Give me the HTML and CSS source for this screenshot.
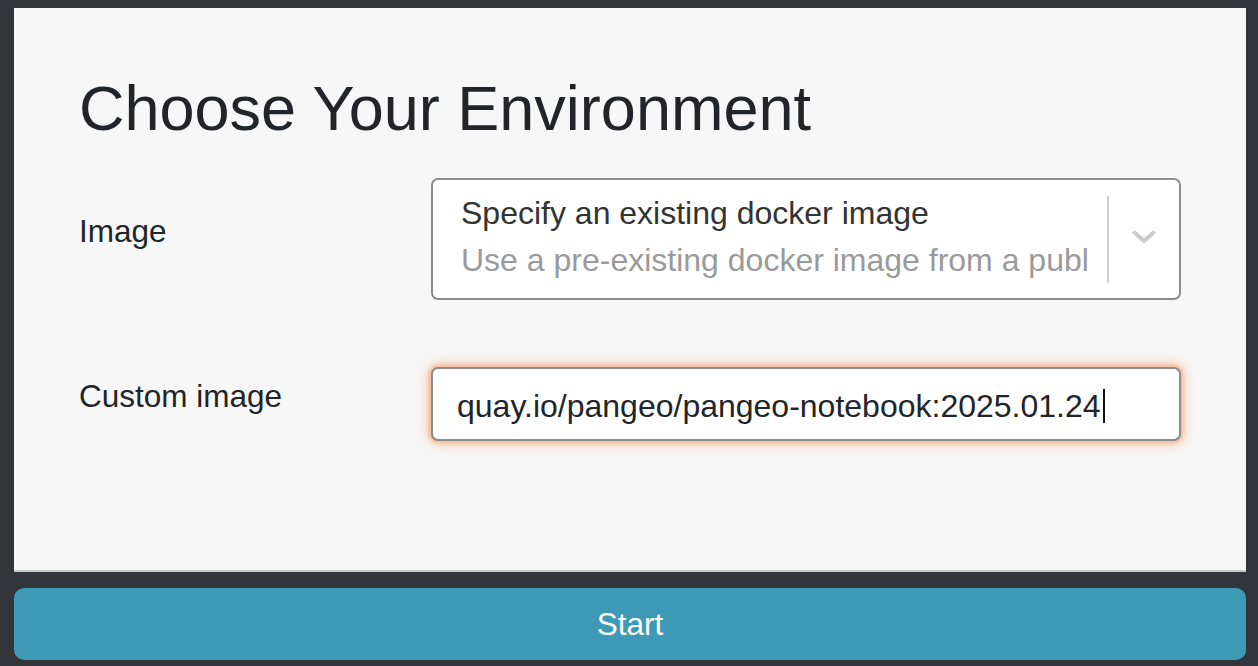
FILE: index.html
```html
<!DOCTYPE html>
<html lang="en">
<head>
<meta charset="utf-8">
<title>Choose Your Environment</title>
<link rel="stylesheet" href="styles.css">
</head>
<body>
  <main class="panel">
    <h1 class="title">Choose Your Environment</h1>
    <div class="row row-image">
      <label class="label">Image</label>
      <div class="select">
        <div class="select-text">
          <div class="select-main">Specify an existing docker image</div>
          <div class="select-sub">Use a pre-existing docker image from a public repository</div>
        </div>
        <div class="select-sep"></div>
        <div class="select-arrow">
          <svg width="24" height="14" viewBox="0 0 24 14"><polyline points="2.5,2.5 12,11 21.5,2.5" fill="none" stroke="#cccccc" stroke-width="4" stroke-linecap="round" stroke-linejoin="round"/></svg>
        </div>
      </div>
    </div>
    <div class="row row-custom">
      <label class="label">Custom image</label>
      <div class="input focused"><span class="input-value">quay.io/pangeo/pangeo-notebook:2025.01.24</span><span class="caret"></span></div>
    </div>
  </main>
  <button class="start">Start</button>
</body>
</html>
```
FILE: styles.css
```css
html, body {
  margin: 0;
  height: 100%;
}
body {
  background: #323539;
  padding: 8px 12px 0 14px;
  box-sizing: border-box;
  font-family: "Liberation Sans", Arial, Helvetica, sans-serif;
  color: #212529;
}
.panel {
  background: #f7f7f7;
  border-bottom: 2px solid #c8c8c8;
  padding: 66px 65px 129px 65px;
  display: flex;
  flex-direction: column;
}
.title {
  margin: 0 0 35px 0;
  font-size: 63px;
  line-height: 69px;
  font-weight: normal;
  color: #212529;
}
.row {
  display: flex;
  align-items: center;
}
.row-custom {
  margin-top: 67px;
}
.label {
  width: 352px;
  flex: none;
  font-size: 31.5px;
  line-height: 48px;
  margin-bottom: 17px;
  color: #212529;
}
.select {
  flex: 1;
  height: 122px;
  box-sizing: border-box;
  background: #fff;
  border: 2px solid #8c8c8c;
  border-radius: 7px;
  display: flex;
  align-items: stretch;
}
.select-text {
  width: 656px;
  flex: none;
  padding: 10px 0 0 28px;
  box-sizing: border-box;
  overflow: hidden;
  white-space: nowrap;
  font-size: 32px;
  line-height: 47px;
}
.select-main {
  color: #333;
}
.select-sub {
  color: #9a9a9a;
}
.select-sep {
  width: 2px;
  background: #d0d0d0;
  margin: 16px 0 15px 18px;
}
.select-arrow {
  flex: 1;
  display: flex;
  align-items: center;
  justify-content: center;
  padding-bottom: 4px;
}
.input {
  flex: 1;
  height: 74px;
  box-sizing: border-box;
  background: #fff;
  border: 2px solid #8c8c8c;
  border-radius: 7px;
  padding: 0 24px;
  display: flex;
  align-items: center;
  font-size: 32px;
  color: #212529;
}
.input.focused {
  box-shadow: 0 0 4px 2px rgba(245, 145, 85, 0.55), 0 0 12px 4px rgba(245, 155, 100, 0.35);
}
.input-value {
  line-height: 40px;
  padding-top: 4px;
}
.caret {
  display: inline-block;
  width: 2px;
  height: 34px;
  background: #111;
  margin-left: 2px;
  margin-top: 4px;
}
.start {
  display: block;
  width: 100%;
  margin-top: 16px;
  height: 72px;
  border: none;
  border-radius: 10px;
  background: #3e99b6;
  color: #fff;
  font-family: "Liberation Sans", Arial, Helvetica, sans-serif;
  font-size: 31.5px;
  padding: 0;
}
```
